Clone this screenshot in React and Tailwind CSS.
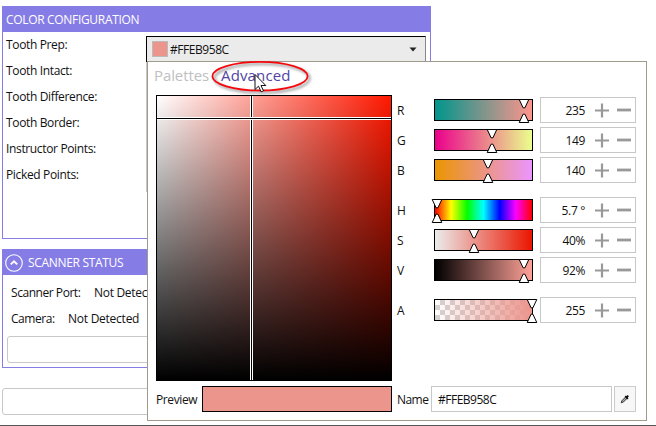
import React from "react";

const sliders = [
  { label: "R", value: "235", pos: 90, bg: "bg-[linear-gradient(to_right,#00958c,#ff958c)]" },
  { label: "G", value: "149", pos: 58, bg: "bg-[linear-gradient(to_right,#eb008c,#ebff8c)]" },
  { label: "B", value: "140", pos: 54, bg: "bg-[linear-gradient(to_right,#eb9500,#eb95ff)]" },
  { label: "H", value: "5.7 °", pos: 3, bg: "bg-[linear-gradient(to_right,#f00,#ff0,#0f0,#0ff,#00f,#f0f,#f00)]" },
  { label: "S", value: "40%", pos: 40, bg: "bg-[linear-gradient(to_right,#ebebeb,#eb1600)]" },
  { label: "V", value: "92%", pos: 90, bg: "bg-[linear-gradient(to_right,#000,#ffa298)]" },
  {
    label: "A",
    value: "255",
    pos: 98,
    bg: "bg-[linear-gradient(to_right,#eb958c00,#eb958c),repeating-conic-gradient(#d3d3d3_0_25%,#fff_0_50%)] bg-[size:100%_100%,10px_10px]",
  },
];

function Handles({ x }) {
  return (
    <svg className="absolute -top-[2px] -left-[7px]" width="112" height="26" viewBox="0 0 112 26">
      <g fill="#fff" stroke="#000" strokeWidth="1" transform={`translate(${x + 6} 0)`}>
        <path d="M-4.8 1.5H4.8L0.9 9.8H-0.9Z" />
        <path d="M-4.8 24.5H4.8L0.9 16.2H-0.9Z" />
      </g>
    </svg>
  );
}

function SliderRow({ item }) {
  return (
    <div className="flex h-[26px] items-center">
      <span className="w-[37px] pt-px leading-[26px]">{item.label}</span>
      <div className={`relative h-[22px] w-[99px] border border-black ${item.bg}`}>
        <Handles x={item.pos} />
      </div>
      <div className="ml-[7px] flex h-[26px] w-[96px] items-center border border-[#c8c8c8]">
        <span className="w-[44px] pt-px text-right leading-[26px]">{item.value}</span>
        <svg className="ml-[10px]" width="38" height="16" viewBox="0 0 38 16">
          <path d="M0 8.5H14M7 1.5V15.5" stroke="#999" strokeWidth="2.2" />
          <path d="M22 8H36" stroke="#999" strokeWidth="2.8" />
        </svg>
      </div>
    </div>
  );
}

function Spectrum() {
  return (
    <div className="relative h-[286px] w-[236px] overflow-hidden border border-black bg-[linear-gradient(to_top,#000,#0000),linear-gradient(to_right,#fff,#ff1800)]">
      <div className="absolute inset-y-0 left-[93px] w-[3px] border-x border-white bg-black" />
      <div className="absolute inset-x-0 top-[21px] h-[3px] border-y border-white bg-black" />
    </div>
  );
}

function Popup() {
  return (
    <div className="absolute top-[61px] left-[147px] h-[360px] w-[500px] border border-[#a09b8c] bg-white pl-[8px]">
      <div className="flex h-[33px] items-center gap-[12px] pb-[7px] text-[15px] whitespace-nowrap">
        <span className="-ml-[2px] w-[55px] tracking-[-0.1px] text-[#c0c0c0]">Palettes</span>
        <span className="tracking-[0.15px] text-[#5045a5]">Advanced</span>
      </div>
      <div className="flex">
        <Spectrum />
        <div className="ml-[5px] flex flex-col gap-[4px] pt-[2px]">
          {sliders.slice(0, 3).map((s) => (
            <SliderRow key={s.label} item={s} />
          ))}
          <div className="h-[6px]" />
          {sliders.slice(3, 6).map((s) => (
            <SliderRow key={s.label} item={s} />
          ))}
          <div className="h-[6px]" />
          <SliderRow item={sliders[6]} />
        </div>
      </div>
      <div className="mt-[5px] flex h-[26px] items-center">
        <span className="w-[46px] pt-px tracking-[-0.4px]">Preview</span>
        <div className="h-[26px] w-[190px] border border-black bg-[#eb958c]" />
        <span className="ml-[5px] w-[34px] pt-px tracking-[-0.55px]">Name</span>
        <div className="h-[26px] w-[181px] border border-[#c8c8c8] pl-[6px] leading-[25px] tracking-[-0.5px]">#FFEB958C</div>
        <div className="ml-[2px] flex h-[26px] w-[22px] items-center justify-center border border-[#ccc] bg-[#f7f7f7]">
          <svg width="10" height="10" viewBox="0 0 10 10">
            <path d="M1.2 8.8L2 6.6L6 2.6L7.4 4L3.4 8Z" fill="#aaa" stroke="#333" />
            <path d="M5.3 2.2L7.9 4.8M6.5 3.4L8.3 1.6" stroke="#111" strokeWidth="1.8" />
          </svg>
        </div>
      </div>
    </div>
  );
}

function Annotation() {
  return (
    <svg className="absolute top-[56px] left-[206px]" width="116" height="46" viewBox="206 56 116 46">
      <ellipse
        cx="260" cy="76.2" rx="47.6" ry="14.3" fill="none" stroke="#f5080c" strokeWidth="1.8"
        className="drop-shadow-[2px_2px_1.5px_rgba(0,0,0,0.5)]"
      />
      <path
        d="M255 74.5V89.5L258.5 86.2L261.1 91.8L263.5 90.8L261 85.5H265.8Z"
        fill="#fff" stroke="#111" strokeWidth="1"
      />
    </svg>
  );
}

const colorRows = ["Tooth Prep:", "Tooth Intact:", "Tooth Difference:", "Tooth Border:", "Instructor Points:", "Picked Points:"];

export default function App() {
  return (
    <div className="relative flex h-[426px] w-[656px] flex-col overflow-hidden bg-white pt-[6px] pl-[2px] font-['Open_Sans',sans-serif] text-[12px] tracking-[-0.35px] whitespace-nowrap text-[#111]">
      <section className="h-[233px] w-[429px] border border-[#867ce5]">
        <h2 className="h-[25px] bg-[#867ce5] pl-[3px] leading-[26px] tracking-[-0.32px] text-white">COLOR CONFIGURATION</h2>
        <div className="flex">
          <div className="w-[143px] pl-[3px]">
            {colorRows.map((r) => (
              <div key={r} className="h-[26px] leading-[26px]">{r}</div>
            ))}
          </div>
          <div className="mt-[4px] h-[156px] w-[280px] border-l border-[#c8c8c8]">
            <div className="-ml-px flex h-[26px] w-[280px] items-center border border-black border-r-[#888] bg-[#ebebeb] pl-[5px]">
              <div className="size-[16px] border border-[#bbb] bg-[#eb958c]" />
              <span className="ml-[2px] pt-px tracking-[-0.45px]">#FFEB958C</span>
              <svg className="mr-[8px] ml-auto" width="8" height="5" viewBox="0 0 8 5">
                <path d="M0.5 0.5H7.5L4 4.5Z" fill="#222" />
              </svg>
            </div>
          </div>
        </div>
      </section>
      <section className="mt-[10px] h-[119px] w-[429px] border border-[#867ce5]">
        <h2 className="flex h-[25px] items-center bg-[#867ce5] pl-[3px] tracking-[-0.32px] text-white">
          <svg className="-ml-px" width="18" height="18" viewBox="0 0 18 18" fill="none" stroke="#fff">
            <circle cx="9" cy="9" r="8.3" strokeWidth="1.1" />
            <path d="M5.8 10.4L9 7.3L12.2 10.4" strokeWidth="1.9" />
          </svg>
          <span className="ml-[5px] pt-px">SCANNER STATUS</span>
        </h2>
        <div className="flex h-[26px] items-center gap-[13px] pt-[10px] pl-[8px]">
          <span className="w-[70px] tracking-[-0.45px]">Scanner Port:</span>
          <span className="tracking-[-0.3px]">Not Detected</span>
        </div>
        <div className="flex h-[26px] items-center gap-[13px] pt-[10px] pl-[8px]">
          <span className="w-[44px] tracking-[-0.45px]">Camera:</span>
          <span className="tracking-[-0.25px]">Not Detected</span>
        </div>
        <div className="mt-[9px] ml-[4px] h-[27px] w-[410px] rounded-[3px] border border-[#c8c8c8]" />
      </section>
      <div className="mt-[20px] h-[27px] w-[429px] rounded-[3px] border border-[#c8c8c8]" />
      <div className="mt-auto -ml-[2px] h-px w-[656px] bg-[#555]" />
      <Popup />
      <Annotation />
    </div>
  );
}
